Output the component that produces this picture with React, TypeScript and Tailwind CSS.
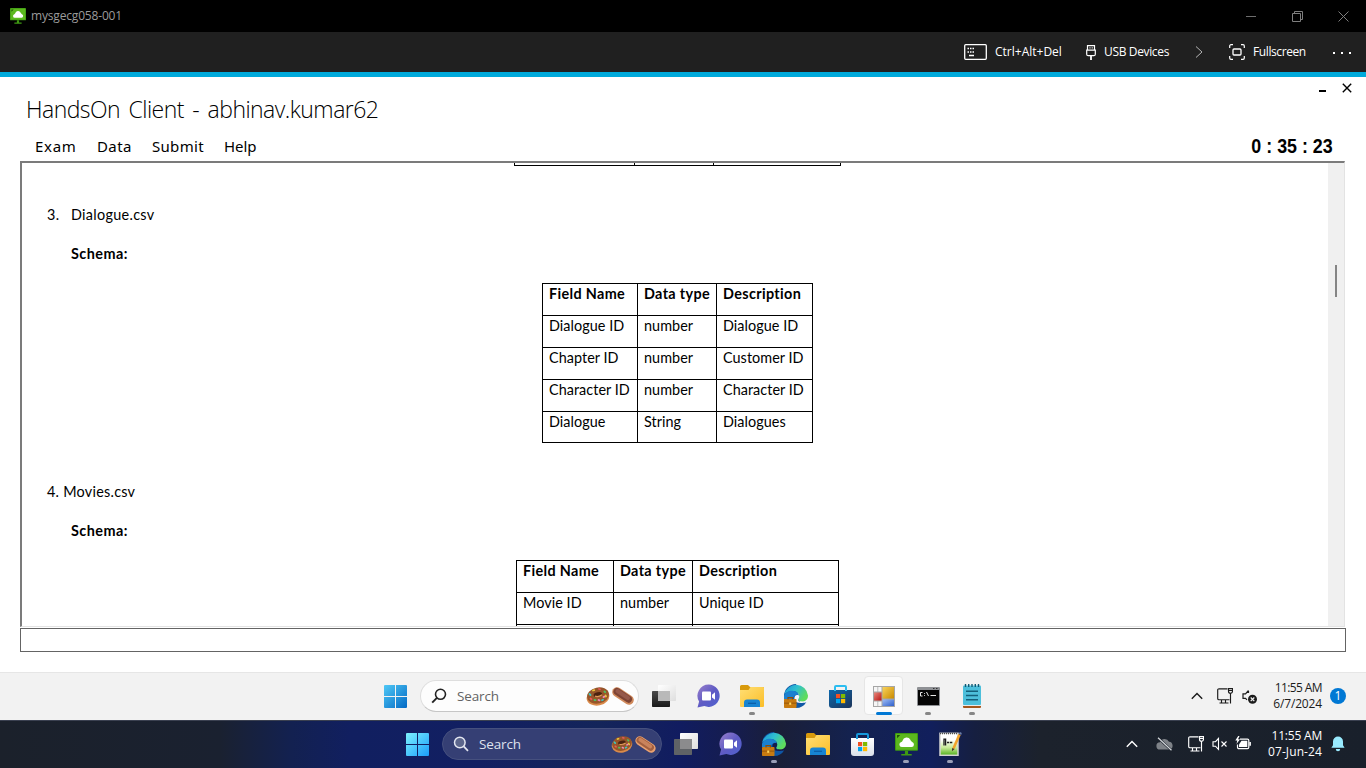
import React from "react";

const SEGOE = "font-['Open_Sans','Noto_Sans',sans-serif]";

/* ---------- window chrome icons ---------- */

function MonitorLogo({ className }: { className: string }) {
  return (
    <svg viewBox="0 0 22 22" className={className}>
      <rect x="0" y="0" width="22" height="17" rx="1" fill="#3f9a12" />
      <rect x="1" y="1" width="20" height="15" fill="#5cb81e" />
      <path d="M2 2h3L2 5z" fill="#1d5208" />
      <path d="M6.500 13.500a2.500 2.500 0 0 1-.5-4.900c.5-.2.9-.6 1.200-1.300A4 4 0 0 1 14.700 6.500c.3 1 1 1.500 1.700 2A2.600 2.600 0 0 1 16 13.500z" fill="#fff" />
      <path d="M9.500 17h3v3h3.500v1.500h-10V20h3.500z" fill="#3f9a12" />
    </svg>
  );
}

/* ---------- taskbar icons ---------- */

function StartIcon({ bright }: { bright?: boolean }) {
  const id = bright ? "startB" : "startA";
  return (
    <svg viewBox="0 0 23 23" className="size-[23px]">
      <defs>
        <linearGradient id={id} x1="0" y1="0" x2="23" y2="23" gradientUnits="userSpaceOnUse">
          <stop offset="0" stopColor={bright ? "#7df1fc" : "#4fc8f6"} />
          <stop offset="1" stopColor={bright ? "#1a9efc" : "#0369c4"} />
        </linearGradient>
      </defs>
      <path d="M1 0h10v11H0V1a1 1 0 0 1 1-1zM12 0h10a1 1 0 0 1 1 1v10H12zM0 12h11v11H1a1 1 0 0 1-1-1zM12 12h11v10a1 1 0 0 1-1 1H12z" fill={`url(#${id})`} />
    </svg>
  );
}

function Donut({ className }: { className: string }) {
  return (
    <svg viewBox="0 0 24 20" className={className}>
      <ellipse cx="12" cy="11" rx="11.500" ry="8.500" fill="#d98a4a" transform="rotate(-12 12 11)" />
      <ellipse cx="12" cy="9.500" rx="11" ry="8" fill="#96552a" transform="rotate(-12 12 9.500)" />
      <ellipse cx="12" cy="8.500" rx="4.300" ry="2.300" fill="#4a2210" transform="rotate(-12 12 9)" />
      <path d="M9 10.200q3.500 1.200 7-1.400" stroke="#e09a5a" strokeWidth="1.300" fill="none" />
      <g strokeWidth="1.800" strokeLinecap="round">
        <path d="M3.500 8l1 1M16 14.200l1-.5" stroke="#3fc8c0" />
        <path d="M7 4.500l1.200-.3M19.500 9.500l.5 1" stroke="#e8c83c" />
        <path d="M13 3l1 .3M4.500 12.500l1 .7" stroke="#e65a5a" />
        <path d="M18.500 5.500l.7.700M8.500 14l1 .2" stroke="#4fc060" />
        <path d="M12.500 14l1 .4M17.500 11l.8-.4" stroke="#f08ac0" />
      </g>
    </svg>
  );
}

function Eclair({ className, lit }: { className: string; lit?: boolean }) {
  return (
    <svg viewBox="0 0 22 18" className={className}>
      <path d="M5 5l12 8" stroke={lit ? "#e8a070" : "#d08a5c"} strokeWidth="9.500" strokeLinecap="round" />
      <path d="M5 4.500l11.500 7.700" stroke={lit ? "#a3603f" : "#7e4434"} strokeWidth="7" strokeLinecap="round" />
      <path d="M5.500 4l10.500 7" stroke={lit ? "#c9835c" : "#96594a"} strokeWidth="4" strokeLinecap="round" />
    </svg>
  );
}

function TaskViewIcon({ dark }: { dark?: boolean }) {
  return (
    <svg viewBox="0 0 24 22" className="h-[22px] w-[24px]">
      <defs>
        <linearGradient id="tvDark" x1="0" y1="0" x2="0" y2="1">
          <stop offset="0" stopColor="#4b4b4b" /><stop offset="1" stopColor="#1a1a1a" />
        </linearGradient>
        <linearGradient id="tvWhite" x1="0" y1="0" x2="1" y2="1">
          <stop offset="0" stopColor="#fff" /><stop offset="1" stopColor="#dedede" />
        </linearGradient>
      </defs>
      {dark ? (
        <>
          <rect x="6" y="0" width="18" height="16" rx=".7" fill="url(#tvWhite)" />
          <rect x="0" y="6" width="18" height="16" rx=".7" fill="#5f6266" />
          <rect x="6" y="6" width="12" height="10" fill="#8b8b8d" />
        </>
      ) : (
        <>
          <rect x="0" y="6" width="18" height="16" rx=".7" fill="url(#tvDark)" />
          <rect x="6" y="0" width="18" height="16" rx=".7" fill="url(#tvWhite)" />
          <rect x="6" y="6" width="12" height="10" fill="#b9b9b9" />
        </>
      )}
    </svg>
  );
}

function ChatIcon() {
  return (
    <svg viewBox="0 0 23 24" className="h-[24px] w-[23px]">
      <defs>
        <linearGradient id="chat" x1="0" y1="0" x2="1" y2="1">
          <stop offset="0" stopColor="#9a80cc" /><stop offset=".5" stopColor="#5f5bc4" /><stop offset="1" stopColor="#4e62cf" />
        </linearGradient>
      </defs>
      <path d="M11.800.5a11.200 11.200 0 1 1-4.500 21.600L.5 23.500l1.600-6A11.200 11.200 0 0 1 11.800.5z" fill="url(#chat)" />
      <rect x="5" y="7.500" width="9" height="9" rx="1" fill="#fff" />
      <path d="M15 10.700l3-2.400v7.500l-3-2.400z" fill="#fff" />
    </svg>
  );
}

function FolderIcon() {
  return (
    <svg viewBox="0 0 24 22" className="h-[22px] w-[24px]">
      <defs>
        <linearGradient id="fold" x1="0" y1="0" x2="1" y2="1">
          <stop offset="0" stopColor="#ffdf75" /><stop offset="1" stopColor="#fbbe28" />
        </linearGradient>
      </defs>
      <path d="M0 1.500A1.500 1.500 0 0 1 1.500 0H8l2 2h13a1 1 0 0 1 1 1v5H0z" fill="#d89a0c" />
      <path d="M0 5h8.500l2-3H23a1 1 0 0 1 1 1v18a1 1 0 0 1-1 1H1a1 1 0 0 1-1-1z" fill="url(#fold)" />
      <path d="M4 22v-4.500a3 3 0 0 1 3-3h10a3 3 0 0 1 3 3V22z" fill="#1784d2" />
      <path d="M8 18.300h8" stroke="#0c5ea8" strokeWidth="1.300" />
    </svg>
  );
}

function EdgeIcon({ dark }: { dark?: boolean }) {
  return (
    <svg viewBox="0 0 24 24" className="size-[24px]">
      <defs>
        <linearGradient id="edgeTop" x1="0" y1="0" x2="1" y2=".5">
          <stop offset="0" stopColor="#1c93d8" /><stop offset=".5" stopColor="#2fc0cf" /><stop offset="1" stopColor="#5fdc5c" />
        </linearGradient>
      </defs>
      <path d="M0 12a12 12 0 0 1 12-12l4 18 6.300.2A12 12 0 0 1 12 24 12 12 0 0 1 0 12z" fill="#0f57a5" />
      <path d="M.3 10.500A12 12 0 0 1 24 11.500c0 4-2.700 6-6 6-3 0-4.300-1.300-3.800-2.300.8-1 1.100-1.800 1-3C15 9 12 7 8.500 7 4.500 7 1.500 9 .3 10.500z" fill="url(#edgeTop)" />
      <path d="M0 12C1 8.500 5 6.500 8.500 6.700c3.700.2 6 2.300 6.200 4.300-3-1-5.700 1-5.700 4H0z" fill="#1a80d0" />
      <path d="M10.500 15.500c-.7-3.500 1.700-5.500 4.300-4 .6 1.400.3 2.700-.5 3.700-.8 1.600 1 2.600 4 2.600 2.200 0 3.800-.7 4.700-1.500-.2.800-.6 1.400-1 1.900-2 .6-3.500.8-5 .8-3.500 0-5.800-1-6.500-3.500z" fill={dark ? "#141c4c" : "#f2f6fa"} />
      <rect x="0" y="15" width="12.500" height="9" rx=".8" fill="#c77a10" />
      <path d="M4 15.500v-1.800h4.400v1.800" stroke="#8a4d08" strokeWidth="1.200" fill="none" />
      <rect x="0" y="18.700" width="12.500" height=".8" fill="#8a4d08" />
      <rect x="5.200" y="18.500" width="2" height="2.300" fill="#ffd65a" />
    </svg>
  );
}

function StoreIcon({ light }: { light?: boolean }) {
  return (
    <svg viewBox="0 0 23 23" className="size-[23px]">
      <defs>
        <linearGradient id="storeBlue" x1="0" y1="0" x2="1" y2="1">
          <stop offset="0" stopColor="#0c68ad" /><stop offset="1" stopColor="#1d3459" />
        </linearGradient>
        <linearGradient id="storeWhite" x1="0" y1="0" x2="0" y2="1">
          <stop offset="0" stopColor="#fff" /><stop offset="1" stopColor="#d9e0ea" />
        </linearGradient>
      </defs>
      <path d="M0 5h23v15a3 3 0 0 1-3 3H3a3 3 0 0 1-3-3z" fill={light ? "url(#storeWhite)" : "url(#storeBlue)"} />
      <path d="M6 6V2a1 1 0 0 1 1-1h9a1 1 0 0 1 1 1v4" fill="none" stroke={light ? "#1699dc" : "#2bbdf0"} strokeWidth="2" />
      <rect x="7" y="9" width="4.200" height="4.200" fill="#f25022" />
      <rect x="12" y="9" width="4.200" height="4.200" fill="#7fba00" />
      <rect x="7" y="14" width="4.200" height="4.200" fill="#00a4ef" />
      <rect x="12" y="14" width="4.200" height="4.200" fill="#ffb900" />
    </svg>
  );
}

function FormsIcon() {
  return (
    <svg viewBox="0 0 22 21" className="h-[21px] w-[22px]">
      <defs>
        <linearGradient id="fy" x1="0" y1="0" x2="1" y2="1"><stop offset="0" stopColor="#f9d35c" /><stop offset="1" stopColor="#c98a00" /></linearGradient>
        <linearGradient id="fr" x1="0" y1="0" x2="1" y2="1"><stop offset="0" stopColor="#e8897c" /><stop offset="1" stopColor="#b81414" /></linearGradient>
        <linearGradient id="fb" x1="0" y1="0" x2="1" y2="1"><stop offset="0" stopColor="#9dbcf5" /><stop offset="1" stopColor="#2f5fcb" /></linearGradient>
      </defs>
      <rect width="22" height="21" fill="#a6a6a6" />
      <rect x="1" y="1" width="3.500" height="4.500" fill="#f6f6f6" />
      <rect x="5.200" y="1" width="3.300" height="4.500" fill="#f6f6f6" />
      <rect x="1" y="6.500" width="7.500" height="8" fill="url(#fr)" />
      <rect x="9.500" y="1" width="11.500" height="11.500" fill="url(#fy)" />
      <rect x="9.500" y="13.500" width="11.500" height="6.500" fill="url(#fb)" />
      <rect x="1" y="15.500" width="3.500" height="4.500" fill="#f6f6f6" />
      <rect x="5.200" y="15.500" width="3.300" height="4.500" fill="#f6f6f6" />
    </svg>
  );
}

function CmdIcon() {
  return (
    <svg viewBox="0 0 23 19" className="h-[19px] w-[23px]">
      <rect width="23" height="19" rx="1" fill="#8e9094" />
      <rect x="1" y="3" width="21" height="15" fill="#050505" />
      <rect x="16" y="1" width="1.500" height="1" fill="#333" /><rect x="19" y="1" width="1.500" height="1" fill="#333" />
      <path d="M5.500 5.500H3.500v3.500h2M7.500 6v.8M7.500 8v.8M9.500 5l2 4M13.500 8.500H19" stroke="#e8e8e8" strokeWidth="1" fill="none" />
    </svg>
  );
}

function NotepadIcon() {
  return (
    <svg viewBox="0 0 18 24" className="h-[24px] w-[18px]">
      <rect x="0" y="21" width="18" height="3" rx="1" fill="#a5561d" />
      <rect x="0" y="20.500" width="18" height="1.500" fill="#e9e9e9" />
      <rect x="0" y="1.500" width="18" height="19.500" rx="1" fill="#4dbfdb" />
      <path d="M2.500 0v3M5.700 0v3M9 0v3M12.300 0v3M15.500 0v3" stroke="#125a74" strokeWidth="1.400" />
      <path d="M3 7.200h12M3 11.500h12M3 15.700h12" stroke="#14607b" strokeWidth="1.600" />
    </svg>
  );
}

function NotepadPlusIcon() {
  return (
    <svg viewBox="0 0 23 24" className="h-[24px] w-[23px]">
      <defs>
        <linearGradient id="npp" x1="0" y1="0" x2="0" y2="1"><stop offset=".3" stopColor="#fff" /><stop offset=".65" stopColor="#c8eb98" /><stop offset="1" stopColor="#4fae1a" /></linearGradient>
      </defs>
      <rect x="1" y="1.300" width="18" height="22" fill="url(#npp)" stroke="#d4d4d4" strokeWidth="1.500" />
      <path d="M1 1.500h18" stroke="#4d4d4d" strokeWidth="1.500" strokeDasharray="1 1" />
      <path d="M5 13.500V7.200h1.600v6.300M8 10.500h2.300M11 10.500h2.300" stroke="#1d1d1d" strokeWidth="1.300" fill="none" />
      <path d="M20.500 2.500L14.500 16.500" stroke="#f2a32b" strokeWidth="2.600" />
      <path d="M19.800 1.500l1.200-1.400 1.800.9-.6 2z" fill="#6b7ea8" />
      <path d="M13.200 16l2.400 1-2.700 2.300z" fill="#473020" />
    </svg>
  );
}

/* ---------- taskbar pieces ---------- */

type Dot = "none" | "light" | "dark" | "active";

function Slot({ children, dot = "none" }: { children: React.ReactNode; dot?: Dot }) {
  return (
    <div className="relative flex h-[48px] w-[44px] items-center justify-center">
      {dot === "active" && <div className="absolute top-[4px] left-[2px] h-[39px] w-[39px] rounded-[4px] border border-[#e6e6e6] bg-[#fbfbfb]" />}
      <div className="relative">{children}</div>
      {dot === "active" && <div className="absolute top-[40px] left-[14px] h-[3px] w-[16px] rounded-full bg-[#0078d4]" />}
      {dot === "light" && <div className="absolute top-[40px] left-[19px] h-[3px] w-[6px] rounded-full bg-[#868686]" />}
      {dot === "dark" && <div className="absolute top-[40px] left-[19px] h-[3px] w-[6px] rounded-full bg-[#9a9fb8]" />}
    </div>
  );
}

function Chevron({ stroke }: { stroke: string }) {
  return (
    <svg viewBox="0 0 12 8" className="h-[8px] w-[12px]">
      <path d="M.8 6.800L6 1.500l5.200 5.300" fill="none" stroke={stroke} strokeWidth="1.400" />
    </svg>
  );
}

function NetIcon({ stroke }: { stroke: string }) {
  return (
    <svg viewBox="0 0 16 16" className="size-[16px]">
      <path d="M10.500.8H2A1.300 1.300 0 0 0 .7 2.100v8.300a1.300 1.300 0 0 0 1.300 1.300h10.500M4.500 11.700v3M8.500 11.700v3M2.500 15h9" fill="none" stroke={stroke} strokeWidth="1.150" />
      <path d="M11.500.6h4v2.700a1.800 1.800 0 0 1-4 0zM13.500 5v10.500" fill="none" stroke={stroke} strokeWidth="1.150" />
      <path d="M11.500 2.500h4" stroke={stroke} strokeWidth="1" />
    </svg>
  );
}

function RemoteTaskbar() {
  return (
    <div className="flex h-[48px] shrink-0 bg-[#f2f2f2] shadow-[inset_0_1px_0_#e6e6e6]">
      <div className="flex w-[994px] shrink-0 pl-[373px]">
        <Slot><StartIcon /></Slot>
        <div className="mt-[8px] mr-[3px] ml-[3px] flex h-[32px] w-[219px] shrink-0 items-center rounded-full border border-[#dedede] border-b-[#c6c6c6] bg-[#fdfdfd]">
          <svg viewBox="0 0 16 16" className="ml-[10px] size-[16px]">
            <circle cx="9.500" cy="6.300" r="5" fill="none" stroke="#222" strokeWidth="1.600" />
            <path d="M5.900 9.900L1.200 14.700" stroke="#222" strokeWidth="1.900" />
          </svg>
          <span className="ml-[10px] w-[129px] text-[13.500px] leading-[20px] tracking-[-0.150px] text-[#636363]">Search</span>
          <Donut className="h-[20px] w-[24px]" />
          <Eclair className="ml-[2px] h-[18px] w-[22px]" />
        </div>
        <Slot><TaskViewIcon /></Slot>
        <Slot><ChatIcon /></Slot>
        <Slot dot="light"><FolderIcon /></Slot>
        <Slot><EdgeIcon /></Slot>
        <Slot><StoreIcon /></Slot>
        <Slot dot="active"><FormsIcon /></Slot>
        <Slot dot="light"><CmdIcon /></Slot>
        <Slot dot="light"><NotepadIcon /></Slot>
      </div>
      <div className="ml-auto flex items-center pr-[20px]">
        <Chevron stroke="#1b1b1b" />
        <div className="ml-[14px]"><NetIcon stroke="#1b1b1b" /></div>
        <svg viewBox="0 0 16 16" className="mt-[2px] ml-[9px] size-[16px]">
          <path d="M6.500 2v2M6.500 1.500L3.500 4.800H1v4.500h2.500l1.500 1.500" fill="none" stroke="#1b1b1b" strokeWidth="1.200" />
          <circle cx="10.500" cy="10.300" r="4.500" fill="#1b1b1b" />
          <path d="M8.700 8.500l3.600 3.600M12.300 8.500l-3.600 3.600" stroke="#f2f2f2" strokeWidth="1.200" />
        </svg>
        <div className="w-[64px] text-right text-[12px] leading-[16px] whitespace-nowrap text-[#1b1b1b]">
          <div className="tracking-[-0.600px]">11:55 AM</div>
          <div className="tracking-[-0.150px]">6/7/2024</div>
        </div>
        <div className="ml-[8px] flex size-[16px] items-center justify-center rounded-full bg-[#0078d4] text-[12px] leading-[16px] text-white">1</div>
      </div>
    </div>
  );
}

function HostTaskbar() {
  return (
    <div className="flex h-[48px] shrink-0 bg-[linear-gradient(90deg,#1b212b_0px,#1a2130_220px,#132150_290px,#111f60_350px,#121f62_480px,#14255a_600px,#111c60_680px,#161d4c_740px,#1a1f38_780px,#14224f_850px,#111f5c_930px,#161f40_975px,#1c222c_1040px,#19202b_1366px)] shadow-[inset_0_1px_0_#3a4050]">
      <div className="flex w-[972px] shrink-0 pl-[395px]">
        <Slot><StartIcon bright /></Slot>
        <div className="mt-[8px] mr-[2px] ml-[3px] flex h-[32px] w-[220px] shrink-0 items-center rounded-full border border-[#46507e] bg-[#353f74]">
          <svg viewBox="0 0 16 16" className="ml-[10px] size-[16px]">
            <circle cx="6.800" cy="6.500" r="5.300" fill="#5c668c" stroke="#e3e6f0" strokeWidth="1.500" />
            <path d="M10.700 10.400L15 14.800" stroke="#e3e6f0" strokeWidth="1.800" />
          </svg>
          <span className="ml-[10px] w-[132px] text-[13.500px] leading-[20px] tracking-[-0.150px] text-[#dfe2ee]">Search</span>
          <Donut className="h-[18px] w-[22px]" />
          <Eclair lit className="ml-[2px] h-[17px] w-[21px]" />
        </div>
        <Slot><TaskViewIcon dark /></Slot>
        <Slot><ChatIcon /></Slot>
        <Slot dot="dark"><EdgeIcon dark /></Slot>
        <Slot><FolderIcon /></Slot>
        <Slot><StoreIcon light /></Slot>
        <Slot dot="dark"><MonitorLogo className="size-[23px]" /></Slot>
        <Slot dot="dark"><NotepadPlusIcon /></Slot>
      </div>
      <div className="ml-auto flex items-center pr-[21px]">
        <Chevron stroke="#fff" />
        <svg viewBox="0 0 17 14" className="ml-[18px] h-[14px] w-[17px]">
          <path d="M4 12.500A3.600 3.600 0 0 1 4 5.300a4.900 4.900 0 0 1 9-.5A3.900 3.900 0 0 1 13.500 12.500z" fill="#7e8288" />
          <path d="M2 .8l13.500 12.500" stroke="#1b212b" strokeWidth="2.400" />
          <path d="M2 .8l13.500 12.500" stroke="#d5d8dc" strokeWidth="1.200" />
        </svg>
        <div className="ml-[15px]"><NetIcon stroke="#fff" /></div>
        <svg viewBox="0 0 16 14" className="ml-[8px] h-[14px] w-[16px]">
          <path d="M6.500 1.500L3.500 4.700H1v4.500h2.500l3 3.200z" fill="none" stroke="#fff" strokeWidth="1.100" />
          <path d="M9.500 4.500l5 5M14.500 4.500l-5 5" stroke="#fff" strokeWidth="1.100" />
        </svg>
        <svg viewBox="0 0 16 14" className="mb-[2px] ml-[7px] h-[14px] w-[16px]">
          <path d="M5 3.200h7.500a1.300 1.300 0 0 1 1.300 1.300v6.800a1.300 1.300 0 0 1-1.300 1.300H3.800a1.300 1.300 0 0 1-1.300-1.300V8.500" fill="none" stroke="#fff" strokeWidth="1.200" />
          <path d="M6.500 4.700h5.800v6.300H4V8.500z" fill="#fff" />
          <path d="M14.300 6h1.600v3.800h-1.600z" fill="#fff" />
          <path d="M3.200 0L.3 4.500h2L1.500 8 5 3.200H3L4.500 0z" fill="#fff" />
        </svg>
        <div className="w-[71px] text-right text-[12px] leading-[16px] whitespace-nowrap text-white">
          <div className="tracking-[-0.200px]">11:55 AM</div>
          <div className="tracking-[0.100px]">07-Jun-24</div>
        </div>
        <svg viewBox="0 0 14 16" className="ml-[9px] h-[16px] w-[14px]">
          <path d="M7 .5a5 5 0 0 1 5 5v3.700l1.600 2.600H.4L2 9.200V5.500a5 5 0 0 1 5-5z" fill="#99ebff" />
          <path d="M4.800 13h4.400a2.200 2.200 0 0 1-4.400 0z" fill="#99ebff" />
        </svg>
      </div>
    </div>
  );
}

/* ---------- document ---------- */

function SchemaTable({ cols, rows, className }: { cols: string; rows: string[][]; className: string }) {
  return (
    <div className={`border-t border-l border-black ${className}`}>
      {rows.map((row, r) => (
        <div key={r} className={`grid ${r === rows.length - 1 ? "h-[31px]" : "h-[32px]"} ${cols}`}>
          {row.map((cell, c) => (
            <div key={c} className={`border-r border-b border-black pt-[1px] pl-[6px] whitespace-nowrap ${r === 0 ? "font-bold tracking-[0.350px]" : "tracking-[0.050px]"}`}>{cell}</div>
          ))}
        </div>
      ))}
    </div>
  );
}

const dialogueRows = [
  ["Field Name", "Data type", "Description"],
  ["Dialogue ID", "number", "Dialogue ID"],
  ["Chapter ID", "number", "Customer ID"],
  ["Character ID", "number", "Character ID"],
  ["Dialogue", "String", "Dialogues"],
];

const movieRows = [
  ["Field Name", "Data type", "Description"],
  ["Movie ID", "number", "Unique ID"],
  ["", "", ""],
];

function DocumentPane() {
  return (
    <div className="mx-[20px] mb-[1px] flex h-[466px] w-[1325px] shrink-0 border-t-2 border-r border-b border-l-2 border-t-[#7b7b7b] border-r-[#e3e3e3] border-b-[#e3e3e3] border-l-[#7b7b7b]">
      <div className="h-full grow overflow-hidden font-['Lato','Liberation_Sans',sans-serif] text-[14.400px] leading-[18px] text-black">
        <div className="ml-[492px] grid h-[3px] w-[327px] grid-cols-[120px_79px_127px] border-b border-l border-black">
          <div className="border-r border-black" /><div className="border-r border-black" /><div className="border-r border-black" />
        </div>
        <div className="mt-[40px] ml-[25px] flex tracking-[0.300px]"><span className="w-[24px]">3.</span><span>Dialogue.csv</span></div>
        <div className="mt-[21px] ml-[49px] font-bold tracking-[0.450px]">Schema:</div>
        <SchemaTable className="mt-[20px] ml-[520px] w-[271px]" cols="grid-cols-[95px_79px_96px]" rows={dialogueRows} />
        <div className="mt-[40px] ml-[25px] tracking-[0.250px]">4. Movies.csv</div>
        <div className="mt-[21px] ml-[49px] font-bold tracking-[0.450px]">Schema:</div>
        <SchemaTable className="mt-[20px] ml-[494px] w-[323px]" cols="grid-cols-[97px_79px_146px]" rows={movieRows} />
      </div>
      <div className="h-full w-[16px] shrink-0 bg-[#f0f0f0] pt-[102px] pl-[7px]">
        <div className="h-[32px] w-[2px] bg-[#858585]" />
      </div>
    </div>
  );
}

export default function App() {
  return (
    <div className={`flex h-[768px] w-[1366px] flex-col overflow-hidden bg-white ${SEGOE}`}>
      <header className="flex h-[32px] shrink-0 items-center bg-black pl-[10px]">
        <MonitorLogo className="size-[16px]" />
        <span className="ml-[5px] text-[12px] leading-[16px] tracking-[-0.170px] text-[#9b9b9b]">mysgecg058-001</span>
        <div className="ml-auto flex items-center pr-[17px]">
          <svg viewBox="0 0 11 11" className="size-[11px]"><path d="M0 5.500h10" stroke="#6e6e6e" /></svg>
          <svg viewBox="0 0 11 11" className="ml-[35px] size-[11px]"><path d="M.5 2.500h8v8h-8zM2.500 2.500v-2h8v8h-2" fill="none" stroke="#7e7e7e" /></svg>
          <svg viewBox="0 0 11 11" className="ml-[35px] size-[11px]"><path d="M.5.5l10 10M10.500.5l-10 10" stroke="#7e7e7e" /></svg>
        </div>
      </header>

      <div className="flex h-[40px] shrink-0 items-center justify-end bg-[#202020] pr-[15px] text-[12px] leading-[16px] text-white">
        <svg viewBox="0 0 23 16" className="h-[16px] w-[23px]">
          <rect x=".7" y=".7" width="21.600" height="14.600" rx="1" fill="none" stroke="#fff" strokeWidth="1.300" />
          <path d="M3.500 4.500H5M6 4.500h1.500M8.500 4.500H10M3.500 8H5M6 8h1.500M8.500 8H10M5 11.500h5" stroke="#fff" strokeWidth="1.500" />
        </svg>
        <span className="ml-[8px] w-[68px] whitespace-nowrap">Ctrl+Alt+Del</span>
        <svg viewBox="0 0 10 15" className="ml-[23px] h-[15px] w-[10px]">
          <path d="M1.500 5V.7h7V5M.7 5.200h8.600v4a1.500 1.500 0 0 1-1.500 1.500H2.200A1.500 1.500 0 0 1 .7 9.200zM3.500 2.800h1M5.700 2.800h1" fill="none" stroke="#fff" strokeWidth="1.200" />
          <path d="M5 10.700V15" stroke="#fff" strokeWidth="1.800" />
        </svg>
        <span className="ml-[8px] w-[66px] tracking-[-0.350px] whitespace-nowrap">USB Devices</span>
        <svg viewBox="0 0 8 12" className="ml-[25px] h-[12px] w-[8px]"><path d="M1 .5L7 6l-6 5.500" fill="none" stroke="#b5b5b5" /></svg>
        <svg viewBox="0 0 16 16" className="ml-[26px] size-[16px]">
          <path d="M.7 4V2A1.300 1.300 0 0 1 2 .7h2M12 .7h2A1.300 1.300 0 0 1 15.300 2v2M15.300 12v2a1.300 1.300 0 0 1-1.300 1.300h-2M4 15.300H2A1.300 1.300 0 0 1 .7 14v-2" fill="none" stroke="#fff" strokeWidth="1.200" />
          <rect x="4" y="5" width="8" height="6" rx="1" fill="none" stroke="#fff" strokeWidth="1.300" />
        </svg>
        <span className="ml-[8px] w-[53px] tracking-[-0.400px] whitespace-nowrap">Fullscreen</span>
        <div className="ml-[27px] flex gap-[6px] pt-[2px]">
          <div className="size-[2px] bg-white" /><div className="size-[2px] bg-white" /><div className="size-[2px] bg-white" />
        </div>
      </div>
      <div className="h-[5px] shrink-0 bg-[#00aadb]" />

      <main className="flex h-[595px] shrink-0 flex-col bg-white text-black">
        <div className="flex h-[55px] shrink-0 justify-between">
          <h1 className="mt-[16px] ml-[26px] text-[23px] leading-[32px] font-light tracking-[-0.540px] [word-spacing:3px] whitespace-nowrap">HandsOn Client - abhinav.kumar62</h1>
          <div className="mt-[6px] mr-[14px] flex">
            <div className="mt-[7px] h-[2px] w-[7px] bg-black" />
            <svg viewBox="0 0 10 10" className="ml-[16px] size-[10px]"><path d="M.8.8l8.400 8.400M9.200.8L.8 9.200" stroke="#000" strokeWidth="1.400" /></svg>
          </div>
        </div>
        <div className="mb-[1px] flex h-[28px] shrink-0 items-center font-['Noto_Sans',sans-serif] text-[15px] leading-[20px]">
          <span className="ml-[35px] w-[62px] tracking-[0.700px]">Exam</span>
          <span className="w-[55px] tracking-[0.400px]">Data</span>
          <span className="w-[72px] tracking-[0.300px]">Submit</span>
          <span className="tracking-[-0.100px]">Help</span>
          <span className="mr-[33px] ml-auto origin-right scale-x-[0.850] font-['Liberation_Sans',sans-serif] text-[21px] leading-[24px] font-bold whitespace-nowrap">0 : 35 : 23</span>
        </div>
        <DocumentPane />
        <div className="mx-[20px] h-[24px] shrink-0 border border-[#646464]" />
      </main>

      <RemoteTaskbar />
      <HostTaskbar />
    </div>
  );
}
